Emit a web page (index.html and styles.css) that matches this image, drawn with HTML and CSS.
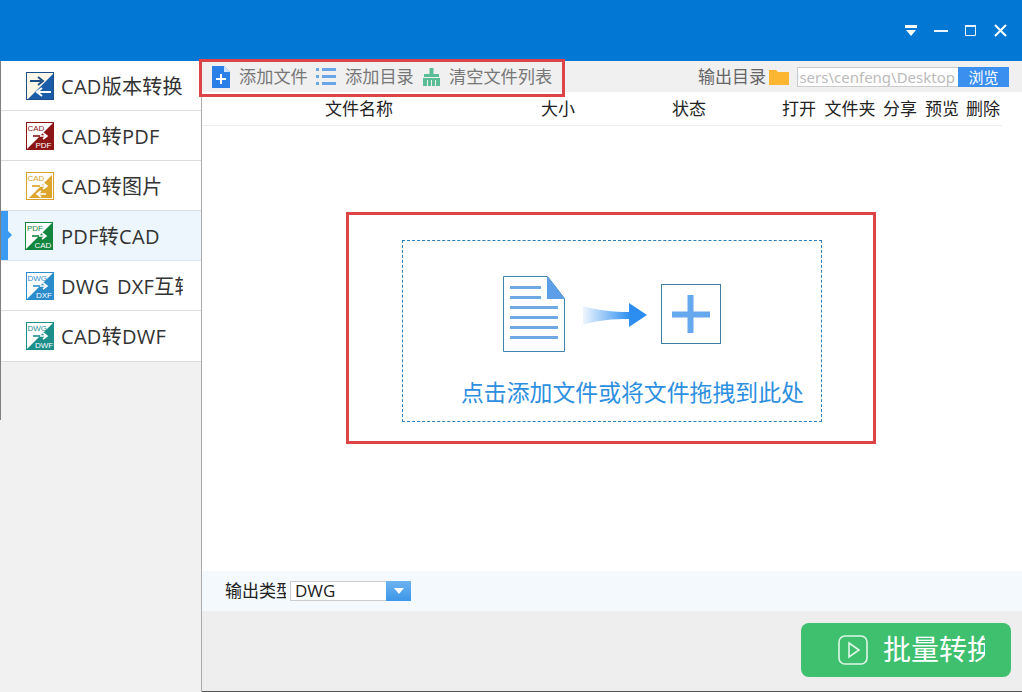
FILE: index.html
```html
<!DOCTYPE html>
<html lang="zh-CN">
<head>
<meta charset="utf-8">
<title>CAD转换器</title>
<link rel="stylesheet" href="styles.css">
</head>
<body>
<div class="app">
  <header class="titlebar">
    <svg class="win-icon menu-ic" viewBox="0 0 12 11"><path d="M0 0h12v3H0z" fill="#fff"/><path d="M1 5h10L6 11z" fill="#fff"/></svg>
    <svg class="win-icon min-ic" viewBox="0 0 14 2"><path d="M0 0h14v2H0z" fill="#e8f4ff"/></svg>
    <svg class="win-icon max-ic" viewBox="0 0 11 11"><path d="M.5 1.500h10v9H.5z" fill="none" stroke="#e8f4ff"/><path d="M0 0h11v2H0z" fill="#e8f4ff"/></svg>
    <svg class="win-icon close-ic" viewBox="0 0 13 13"><path d="M1 1l11 11M12 1L1 12" stroke="#fff" stroke-width="2" fill="none"/></svg>
  </header>
  <div class="body">
    <span class="edge"></span>
    <nav class="sidebar">
      <div class="nav-item">
        <svg class="nav-icon" viewBox="0 0 28 28">
          <rect x=".5" y=".5" width="27" height="27" fill="#fff8e8" stroke="#1d4f86"/>
          <path d="M27 2v25H2z" fill="#1b5ca8"/>
          <path d="M4 9h11M12 5l5 4-5 4" fill="none" stroke="#1d4f86" stroke-width="2"/>
          <path d="M25 20H13M16 16l-5 4 5 4" fill="none" stroke="#fff" stroke-width="2"/>
        </svg>
        <span class="nav-label">CAD版本转换</span>
      </div>
      <div class="nav-item">
        <svg class="nav-icon" viewBox="0 0 28 28">
          <rect x=".5" y=".5" width="27" height="27" fill="#fff" stroke="#8c1515"/>
          <path d="M27 1v26H1z" fill="#8c1515"/>
          <text x="1.500" y="9" class="ic-text" fill="#8c1515">CAD</text>
          <path d="M7 14h7" stroke="#8c1515" stroke-width="1.600"/>
          <path d="M14 14h6M17 11l4 3-4 3" fill="none" stroke="#fff" stroke-width="1.600"/>
          <text x="9.500" y="26" class="ic-text" fill="#fff">PDF</text>
        </svg>
        <span class="nav-label">CAD转PDF</span>
      </div>
      <div class="nav-item">
        <svg class="nav-icon" viewBox="0 0 28 28">
          <rect x=".5" y=".5" width="27" height="27" fill="#fff" stroke="#d9a227"/>
          <path d="M26 3v23H3z" fill="#dca52c"/>
          <text x="1.500" y="9" class="ic-text" fill="#d9a227">CAD</text>
          <path d="M6 14h8" stroke="#d9a227" stroke-width="1.600"/>
          <path d="M14 14h6M17 11l4 3-4 3M20 22h-8M15 19l-4 3 4 3" fill="none" stroke="#fff" stroke-width="1.600"/>
        </svg>
        <span class="nav-label">CAD转图片</span>
      </div>
      <div class="nav-item active">
        <svg class="nav-icon shifted" viewBox="0 0 28 28">
          <rect x=".5" y=".5" width="27" height="27" fill="#fff" stroke="#12853f"/>
          <path d="M27 1v26H1z" fill="#12853f"/>
          <text x="2" y="9" class="ic-text" fill="#12853f">PDF</text>
          <path d="M7 14h7" stroke="#12853f" stroke-width="1.600"/>
          <path d="M14 14h6M17 11l4 3-4 3" fill="none" stroke="#fff" stroke-width="1.600"/>
          <text x="9.500" y="26" class="ic-text" fill="#fff">CAD</text>
        </svg>
        <span class="nav-label">PDF转CAD</span>
      </div>
      <div class="nav-item">
        <svg class="nav-icon" viewBox="0 0 28 28">
          <rect x=".5" y=".5" width="27" height="27" fill="#fff" stroke="#2b8ccb"/>
          <path d="M27 1v26H1z" fill="#2b8ccb"/>
          <text x="1.500" y="9" class="ic-text" fill="#2b8ccb">DWG</text>
          <path d="M7 14h7" stroke="#2b8ccb" stroke-width="1.600"/>
          <path d="M14 14h6M17 11l4 3-4 3" fill="none" stroke="#fff" stroke-width="1.600"/>
          <text x="10" y="26" class="ic-text" fill="#fff">DXF</text>
        </svg>
        <span class="nav-label">DWG DXF互转</span>
      </div>
      <div class="nav-item last">
        <svg class="nav-icon" viewBox="0 0 28 28">
          <rect x=".5" y=".5" width="27" height="27" fill="#fff" stroke="#1c8f8b"/>
          <path d="M27 1v26H1z" fill="#1c8f8b"/>
          <text x="1.500" y="9" class="ic-text" fill="#1c8f8b">DWG</text>
          <path d="M7 14h7" stroke="#1c8f8b" stroke-width="1.600"/>
          <path d="M14 14h6M17 11l4 3-4 3" fill="none" stroke="#fff" stroke-width="1.600"/>
          <text x="9" y="26" class="ic-text" fill="#fff">DWF</text>
        </svg>
        <span class="nav-label">CAD转DWF</span>
      </div>
    </nav>
    <main class="main">
      <div class="toolbar">
        <span class="tool-mark"></span>
        <svg class="ic-add" viewBox="0 0 18 22"><path d="M0 0h12l6 6v16H0z" fill="#2a80e6"/><path d="M12 0l6 6h-6z" fill="#cfe3fa"/><path d="M4 13h10M9 8v10" stroke="#fff" stroke-width="2"/></svg>
        <span class="tool-text t1">添加文件</span>
        <svg class="ic-list" viewBox="0 0 20 17"><g fill="#6aa5e8"><path d="M0 0h3v3H0zM0 7h3v3H0zM0 14h3v3H0z"/><path d="M6 0h14v3H6zM6 7h14v3H6zM6 14h14v3H6z"/></g></svg>
        <span class="tool-text t2">添加目录</span>
        <svg class="ic-broom" viewBox="0 0 17 18"><path d="M6.500 0h4v6h5.500v3H1V6h5.500zM0 10h17v8H0z" fill="#5bbd95"/><path d="M4.500 12v6M8.500 12v6M12.500 12v6" stroke="#f0f0f0"/></svg>
        <span class="tool-text t3">清空文件列表</span>
        <span class="tool-text out">输出目录</span>
        <svg class="ic-folder" viewBox="0 0 20 16"><path d="M0 1h7l2 2h11v13H0z" fill="#fcb631"/></svg>
        <div class="path"><span>C:\Users\cenfeng\Desktop</span></div>
        <button class="browse">浏览</button>
      </div>
      <div class="thead">
        <span class="c c-name">文件名称</span>
        <span class="c c-size">大小</span>
        <span class="c c-state">状态</span>
        <span class="c c-open">打开</span>
        <span class="c c-dir">文件夹</span>
        <span class="c c-share">分享</span>
        <span class="c c-view">预览</span>
        <span class="c c-del">删除</span>
      </div>
      <section class="content">
        <div class="red-frame">
          <div class="dropzone">
            <div class="drop-icons">
              <svg class="ic-doc" viewBox="0 0 62 76">
                <path d="M.5.500h44l17 22v53H.5z" fill="#fff" stroke="#3d85ad"/>
                <path d="M44 0l18 23H44z" fill="#5c9fe8"/>
                <path d="M7 11.500h31M7 21.500h31M7 31.500h48M7 41.500h48M7 51.500h48M7 61.500h48" stroke="#6fa8e3" stroke-width="3"/>
              </svg>
              <svg class="ic-arrow" viewBox="0 0 64 24">
                <defs><linearGradient id="fade" x1="0" x2="1" y1="0" y2="0"><stop offset="0" stop-color="#2b8df0" stop-opacity=".08"/><stop offset=".75" stop-color="#2b8df0"/></linearGradient></defs>
                <path d="M0 3c14 4 30 6 46 6V0l18 12-18 12v-8c-16 0-32 1-46 6z" fill="url(#fade)"/>
              </svg>
              <svg class="ic-plus" viewBox="0 0 60 60">
                <rect x=".5" y=".5" width="59" height="59" fill="#fff" stroke="#3d7f9f"/>
                <path d="M11 30.500h38M29.500 11v38" stroke="#66a8ee" stroke-width="6"/>
              </svg>
            </div>
            <div class="drop-text">点击添加文件或将文件拖拽到此处</div>
          </div>
        </div>
      </section>
      <div class="typebar">
        <span class="type-label">输出类型</span>
        <div class="select">
          <span class="select-val">DWG</span>
          <span class="select-btn"><svg viewBox="0 0 10 6"><path d="M0 0h10L5 6z" fill="#fff"/></svg></span>
        </div>
      </div>
      <footer class="footer">
        <button class="convert">
          <svg class="ic-play" viewBox="0 0 30 30"><rect x="1" y="1" width="28" height="28" rx="6" fill="none" stroke="#dff7e8" stroke-width="1.600"/><path d="M11 8l10 7-10 7z" fill="none" stroke="#dff7e8" stroke-width="1.600"/></svg>
          <span class="convert-text">批量转换</span>
        </button>
      </footer>
    </main>
  </div>
</div>
</body>
</html>
```
FILE: styles.css
```css
* { box-sizing: border-box; }
html, body { margin: 0; padding: 0; height: 100%; }
body {
  font-family: "Noto Sans CJK SC", "Noto Sans", sans-serif;
  background: #fff;
  overflow: hidden;
}
.app { width: 1022px; height: 692px; display: flex; flex-direction: column; }

.titlebar {
  height: 61px;
  flex: none;
  background: #0277d4;
  display: flex;
  align-items: center;
  padding-right: 15px;
  justify-content: flex-end;
}
.win-icon { display: block; flex: none; }
.menu-ic { width: 12px; height: 11px; margin-right: 17px; }
.min-ic { width: 14px; height: 2px; margin-right: 17px; }
.max-ic { width: 11px; height: 11px; margin-right: 18px; }
.close-ic { width: 13px; height: 13px; }

.body { flex: 1; display: flex; position: relative; min-height: 0; }
.edge { position: absolute; z-index: 1; left: 0; top: 0; width: 1px; height: 359px; background: #808080; }

.sidebar { width: 201px; flex: none; background: #f1f1f1; }
.nav-item {
  height: 50px;
  background: #fff;
  border-bottom: 1px solid #dcdcdc;
  display: flex;
  align-items: center;
  padding-left: 26px;
  position: relative;
}
.nav-item.last { height: 51px; }
.nav-item.active { background: #eef6fd; border-bottom-color: #dbe6ef; }
.nav-item.active::before {
  content: "";
  position: absolute;
  left: 1px;
  top: 0;
  bottom: 0;
  width: 7px;
  background: #3a9bf0;
}
.nav-item.active::after {
  content: "";
  position: absolute;
  left: 8px;
  top: 20px;
  border: 4px solid transparent;
  border-left-color: #3a9bf0;
}
.nav-icon { width: 28px; height: 28px; flex: none; display: block; }
.nav-icon.shifted { margin-left: -1px; margin-right: 1px; }
.ic-text { font: 8px "Liberation Sans", sans-serif; }
.nav-label {
  margin-left: 7px;
  margin-top: 2px;
  width: 122px;
  font-family: "Open Sans", "Noto Sans CJK SC", sans-serif;
  font-size: 20px;
  letter-spacing: .3px;
  word-spacing: 2px;
  line-height: 28px;
  color: #333;
  white-space: nowrap;
  overflow: hidden;
}

.main {
  flex: 1;
  min-width: 0;
  display: flex;
  flex-direction: column;
  border-left: 1px solid #aaa;
}

.toolbar {
  height: 31px;
  flex: none;
  background: #f0f0f0;
  display: flex;
  align-items: center;
  position: relative;
  padding-left: 10px;
}
.tool-mark {
  position: absolute;
  left: -3px;
  top: -2px;
  width: 366px;
  height: 38px;
  border: 3px solid #dc4448;
  pointer-events: none;
}
.tool-text { font-size: 17.2px; color: #777; white-space: nowrap; line-height: 24px; margin-bottom: 2px; }
.ic-add { width: 18px; height: 22px; flex: none; margin-right: 9px; }
.t1 { width: 69px; margin-right: 8px; }
.ic-list { width: 20px; height: 17px; flex: none; margin-right: 9px; }
.t2 { width: 68px; margin-right: 10px; }
.ic-broom { width: 17px; height: 18px; flex: none; margin-right: 9px; }
.t3 { width: 103px; margin-right: 146px; }
.out { width: 68px; margin-right: 3px; color: #666; font-size: 17px; }
.ic-folder { width: 20px; height: 16px; flex: none; margin-right: 8px; }
.path {
  width: 161px;
  height: 20px;
  flex: none;
  background: #fff;
  border: 1px solid #ccc;
  border-right: 0;
  display: flex;
  justify-content: flex-end;
  align-items: center;
  overflow: hidden;
  padding-right: 3px;
  font: 15px/18px "Noto Sans", sans-serif;
  color: #bbb;
  white-space: nowrap;
}
.path span { flex: none; }
.browse {
  width: 51px;
  height: 20px;
  flex: none;
  padding: 0;
  border: 0;
  background: #3b8fee;
  color: #fff;
  font: 15px/20px "Noto Sans CJK SC", sans-serif;
}

.thead {
  height: 34px;
  flex: none;
  display: flex;
  align-items: center;
  margin-right: 20px;
  border-bottom: 1px solid #eee;
}
.c { font-size: 17px; line-height: 24px; color: #222; text-align: center; flex: none; margin-bottom: 2px; }
.c-name { width: 314px; }
.c-size { width: 84px; }
.c-state { width: 178px; }
.c-open { width: 42px; }
.c-dir { width: 60px; }
.c-share { width: 40px; }
.c-view { width: 44px; }
.c-del { width: 38px; }

.content { flex: 1; min-height: 0; background: #fff; padding: 86px 0 0 144px; }
.red-frame {
  width: 530px;
  height: 232px;
  border: 3px solid #dc4448;
  padding: 25px 0 0 53px;
}
.dropzone {
  width: 420px;
  height: 182px;
  border: 1px dashed #2b7fb8;
  display: flex;
  flex-direction: column;
}
.drop-icons { display: flex; align-items: flex-start; padding: 35px 0 0 100px; height: 133px; flex: none; }
.ic-doc { width: 62px; height: 76px; flex: none; }
.ic-arrow { width: 64px; height: 24px; flex: none; margin: 27px 14px 0 18px; }
.ic-plus { width: 60px; height: 60px; flex: none; margin-top: 8px; }
.drop-text {
  margin-left: 58px;
  font-size: 22.87px;
  line-height: 34px;
  color: #2d8fe0;
  white-space: nowrap;
}

.typebar {
  height: 40px;
  flex: none;
  background: #f3f9fd;
  display: flex;
  align-items: center;
  padding-left: 23px;
}
.type-label {
  width: 61px;
  font-size: 17px;
  line-height: 24px;
  color: #222;
  white-space: nowrap;
  overflow: hidden;
  margin-right: 4px;
  margin-bottom: 2px;
}
.select {
  width: 121px;
  height: 20px;
  background: #fff;
  border: 1px solid #ccc;
  border-right: 0;
  display: flex;
  align-items: center;
  justify-content: space-between;
}
.select-val { font-family: "Open Sans", sans-serif; font-size: 17px; line-height: 20px; color: #222; margin-left: 4px; }
.select-btn {
  width: 25px;
  height: 20px;
  margin-top: -1px;
  margin-bottom: -1px;
  background: linear-gradient(#6db3f0, #3c96e8);
  display: flex;
  align-items: center;
  justify-content: center;
}
.select-btn svg { width: 10px; height: 6px; display: block; }

.footer {
  height: 81px;
  flex: none;
  background: #eeeeee;
  border-bottom: 1px solid #555;
  padding: 12px 0 0 599px;
}
.convert {
  width: 210px;
  height: 54px;
  padding: 0 0 0 37px;
  border: 0;
  border-radius: 8px;
  background: #3fc06f;
  display: flex;
  align-items: center;
  font-family: inherit;
}
.ic-play { width: 30px; height: 30px; flex: none; margin-right: 15px; }
.convert-text {
  width: 102px;
  font-size: 28px;
  line-height: 40px;
  margin-bottom: 4px;
  color: #fff;
  white-space: nowrap;
  overflow: hidden;
  text-align: left;
}
```
